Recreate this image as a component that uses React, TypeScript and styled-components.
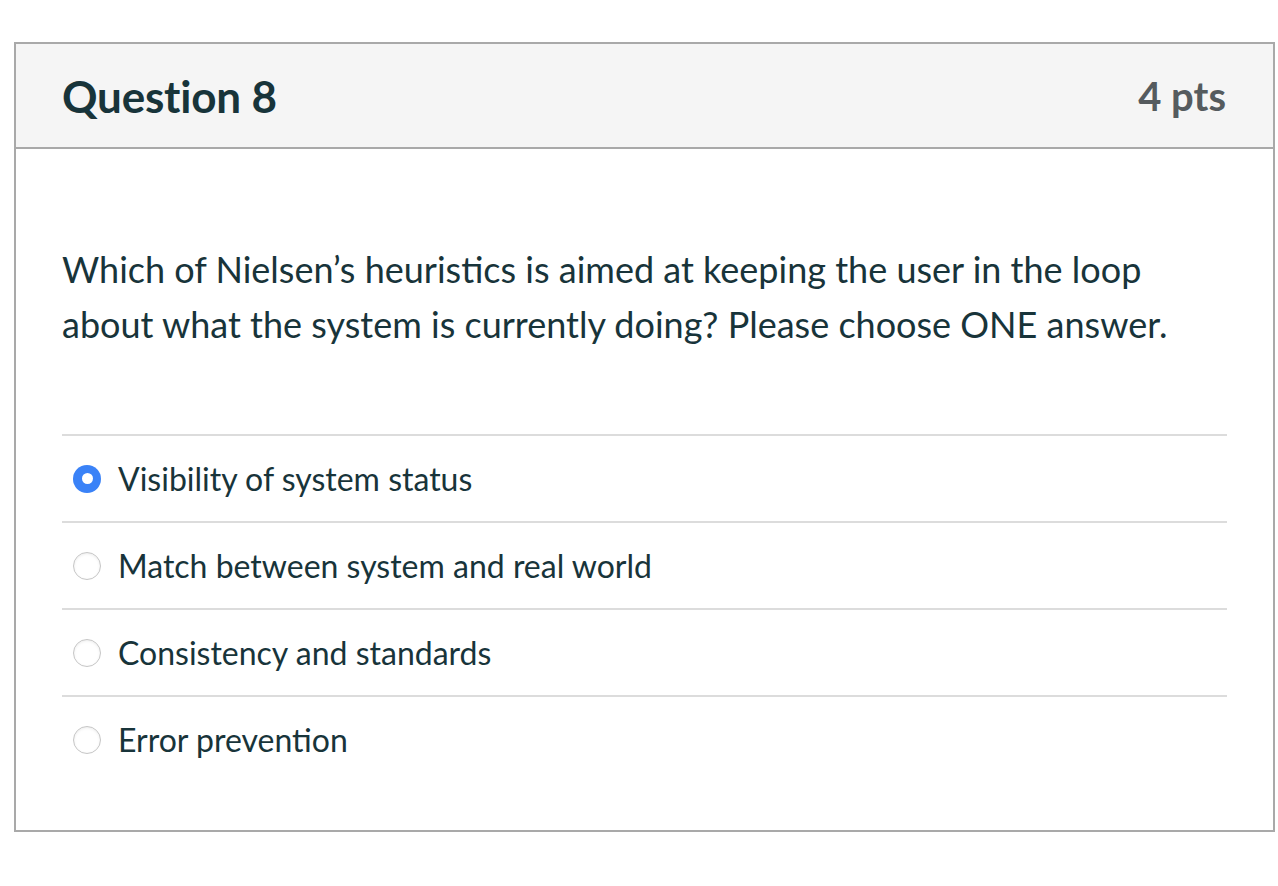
import React, { useState } from "react";
import styled, { createGlobalStyle } from "styled-components";

const Global = createGlobalStyle`
  html, body { margin: 0; padding: 0; background: #ffffff; }
  body { font-family: Lato, "Open Sans", "Liberation Sans", sans-serif; color: #1d3238; }
  * { box-sizing: border-box; }
`;

const Page = styled.div`
  padding: 42px 3px 0 14px;
`;

const Card = styled.section`
  width: 1261px;
  border: 2px solid #a9a9a9;
  background: #ffffff;
`;

const Header = styled.header`
  display: flex;
  align-items: center;
  justify-content: space-between;
  height: 105px;
  padding: 0 47px 0 46px;
  background: #f5f5f5;
  border-bottom: 2px solid #a9a9a9;
`;

const Title = styled.h2`
  margin: 0;
  font-size: 44px;
  font-weight: 700;
  color: #18343a;
  letter-spacing: -0.2px;
`;

const Points = styled.div`
  font-size: 40px;
  font-weight: 700;
  color: #555b5e;
`;

const Body = styled.div`
  padding: 93px 46px 48px 46px;
`;

const Prompt = styled.p`
  margin: 0 0 82px 0;
  font-size: 36px;
  line-height: 55px;
  color: #18343a;
`;

const Answers = styled.div`
  display: flex;
  flex-direction: column;
`;

const Row = styled.label`
  display: flex;
  align-items: center;
  gap: 17px;
  height: 87px;
  padding-left: 11px;
  border-top: 2px solid #dcdcdc;
  cursor: pointer;
  font-size: 32px;
  color: #18343a;
`;

const Radio = styled.span<{ $checked: boolean }>`
  flex: none;
  width: 28px;
  height: 28px;
  border-radius: 50%;
  display: flex;
  align-items: center;
  justify-content: center;
  background: ${(p) => (p.$checked ? "#3a82f7" : "#ffffff")};
  border: ${(p) => (p.$checked ? "none" : "1.5px solid #c6c6c6")};
  box-shadow: ${(p) => (p.$checked ? "none" : "inset 0 1px 3px rgba(0,0,0,0.08)")};
  &::after {
    content: "";
    display: ${(p) => (p.$checked ? "block" : "none")};
    width: 11px;
    height: 11px;
    border-radius: 50%;
    background: #ffffff;
  }
`;

const options = [
  "Visibility of system status",
  "Match between system and real world",
  "Consistency and standards",
  "Error prevention",
];

export default function App() {
  const [sel, setSel] = useState(0);
  return (
    <>
      <Global />
      <Page>
        <Card>
          <Header>
            <Title>Question 8</Title>
            <Points>4 pts</Points>
          </Header>
          <Body>
            <Prompt>
              Which of Nielsen’s heuristics is aimed at keeping the user in the loop
              <br />
              about what the system is currently doing? Please choose ONE answer.
            </Prompt>
            <Answers>
              {options.map((o, i) => (
                <Row key={o} onClick={() => setSel(i)}>
                  <Radio $checked={sel === i} />
                  <span>{o}</span>
                </Row>
              ))}
            </Answers>
          </Body>
        </Card>
      </Page>
    </>
  );
}
